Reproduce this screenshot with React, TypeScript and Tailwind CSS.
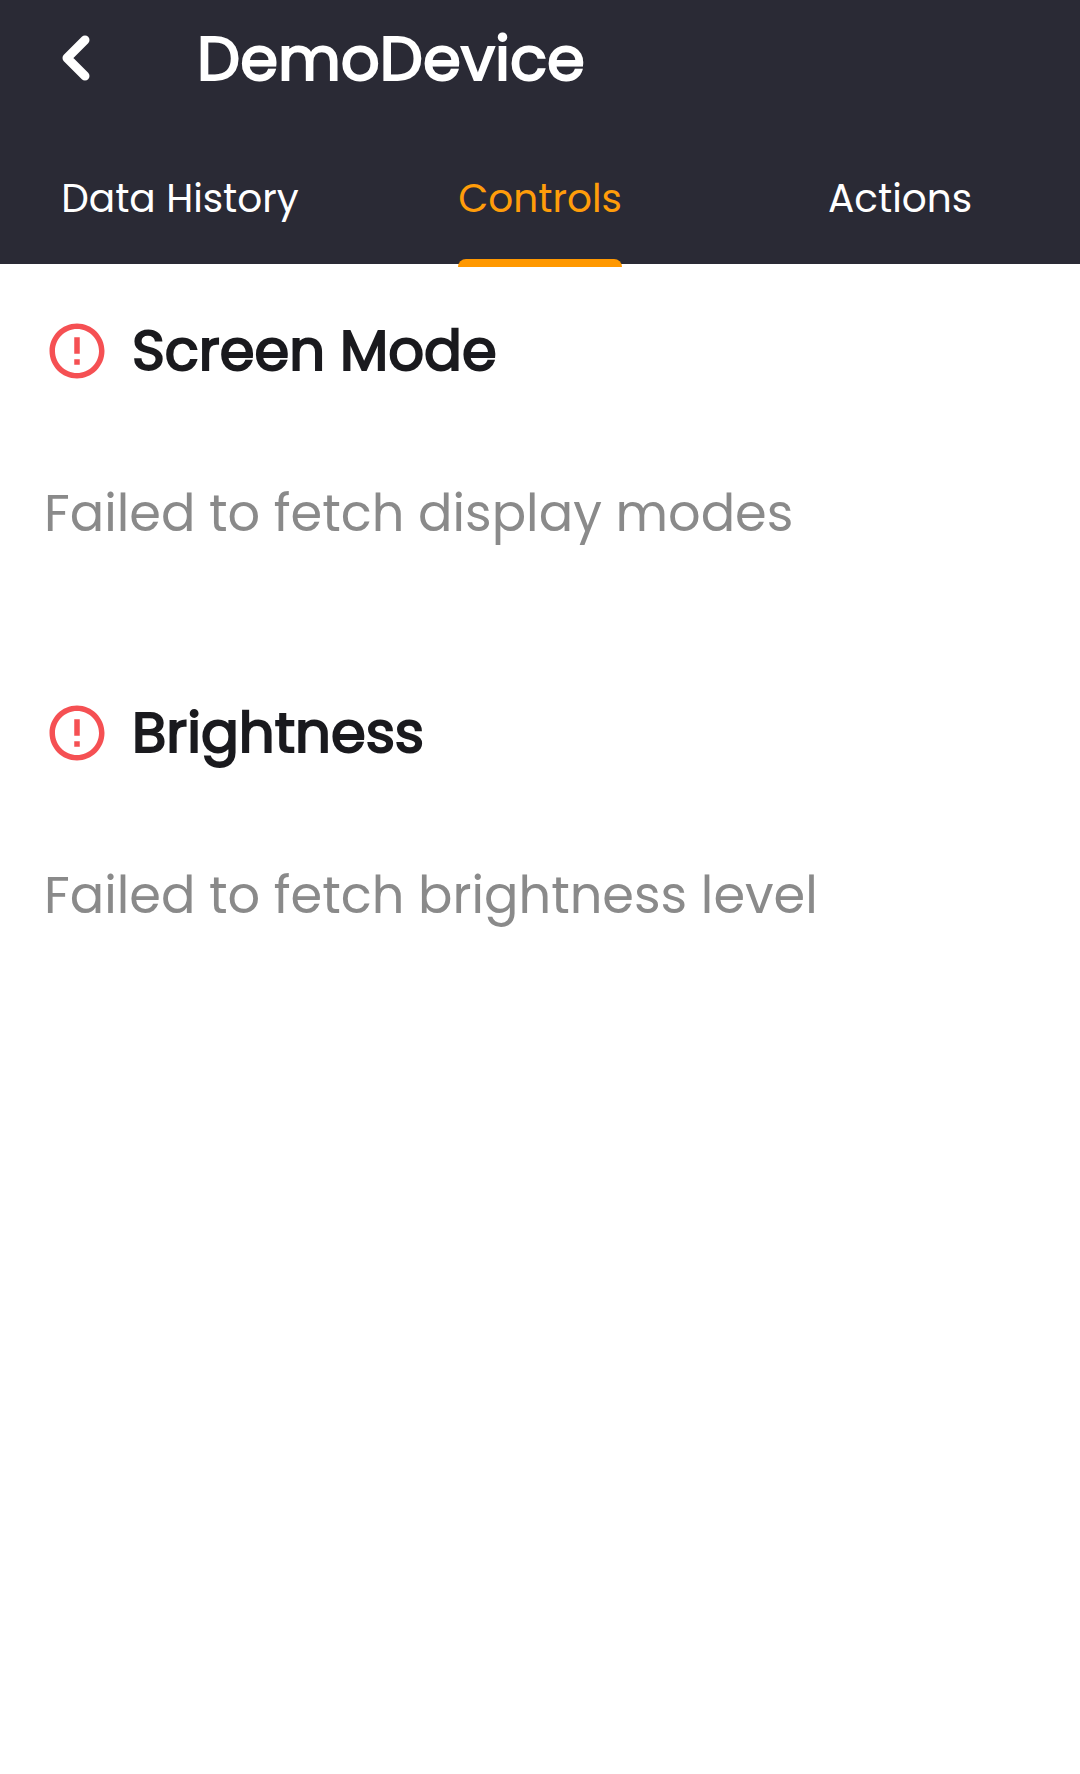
import React from 'react';

const tabs = ['Data History', 'Controls', 'Actions'];

function AlertIcon() {
  return (
    <svg viewBox="0 0 24 24" className="size-[66px] shrink-0 fill-[#f55053]" aria-hidden="true">
      <path d="M11 15h2v2h-2zm0-8h2v6h-2zm.99-5C6.47 2 2 6.48 2 12s4.47 10 9.99 10C17.52 22 22 17.52 22 12S17.52 2 11.99 2zM12 20c-4.42 0-8-3.58-8-8s3.58-8 8-8 8 3.58 8 8-3.58 8-8 8z" />
    </svg>
  );
}

function Section({ title, message }: { title: string; message: string }) {
  return (
    <section className="pb-[140px]">
      <div className="flex items-center gap-[22px]">
        <AlertIcon />
        <h2 className="text-[56px] leading-[84px] font-normal text-[#1a1a1e] [-webkit-text-stroke:2px_currentColor]">{title}</h2>
      </div>
      <p className="mt-[82px] text-[51px] leading-[76px] text-[#8a8a8a]">{message}</p>
    </section>
  );
}

export default function App() {
  return (
    <div className="min-h-screen bg-white font-['Poppins','Inter',sans-serif]">
      <header className="bg-[#2a2a35] text-white">
        <div className="flex h-[132px] items-start pl-[60px]">
          <button aria-label="Back" className="mt-[32px]">
            <svg viewBox="0 0 32 52" className="h-[52px] w-[32px]" fill="none" stroke="currentColor" strokeWidth="9" strokeLinecap="round" strokeLinejoin="round">
              <path d="M25 8 7 26l18 18" />
            </svg>
          </button>
          <h1 className="ml-[105px] mt-[13px] text-[61px] leading-[92px] font-normal [-webkit-text-stroke:2px_currentColor]">DemoDevice</h1>
        </div>
        <nav className="grid h-[132px] grid-cols-3">
          {tabs.map((tab) => (
            <button key={tab} className="flex justify-center text-[39px] leading-[134px]">
              <span className={tab === 'Controls' ? 'relative text-[#ff9d0a]' : ''}>
                {tab}
                {tab === 'Controls' && <span className="absolute inset-x-0 -bottom-px h-[8px] rounded-t-lg bg-[#ff9800]" />}
              </span>
            </button>
          ))}
        </nav>
      </header>
      <main className="px-[44px] pt-[45px]">
        <Section title="Screen Mode" message="Failed to fetch display modes" />
        <Section title="Brightness" message="Failed to fetch brightness level" />
      </main>
    </div>
  );
}
